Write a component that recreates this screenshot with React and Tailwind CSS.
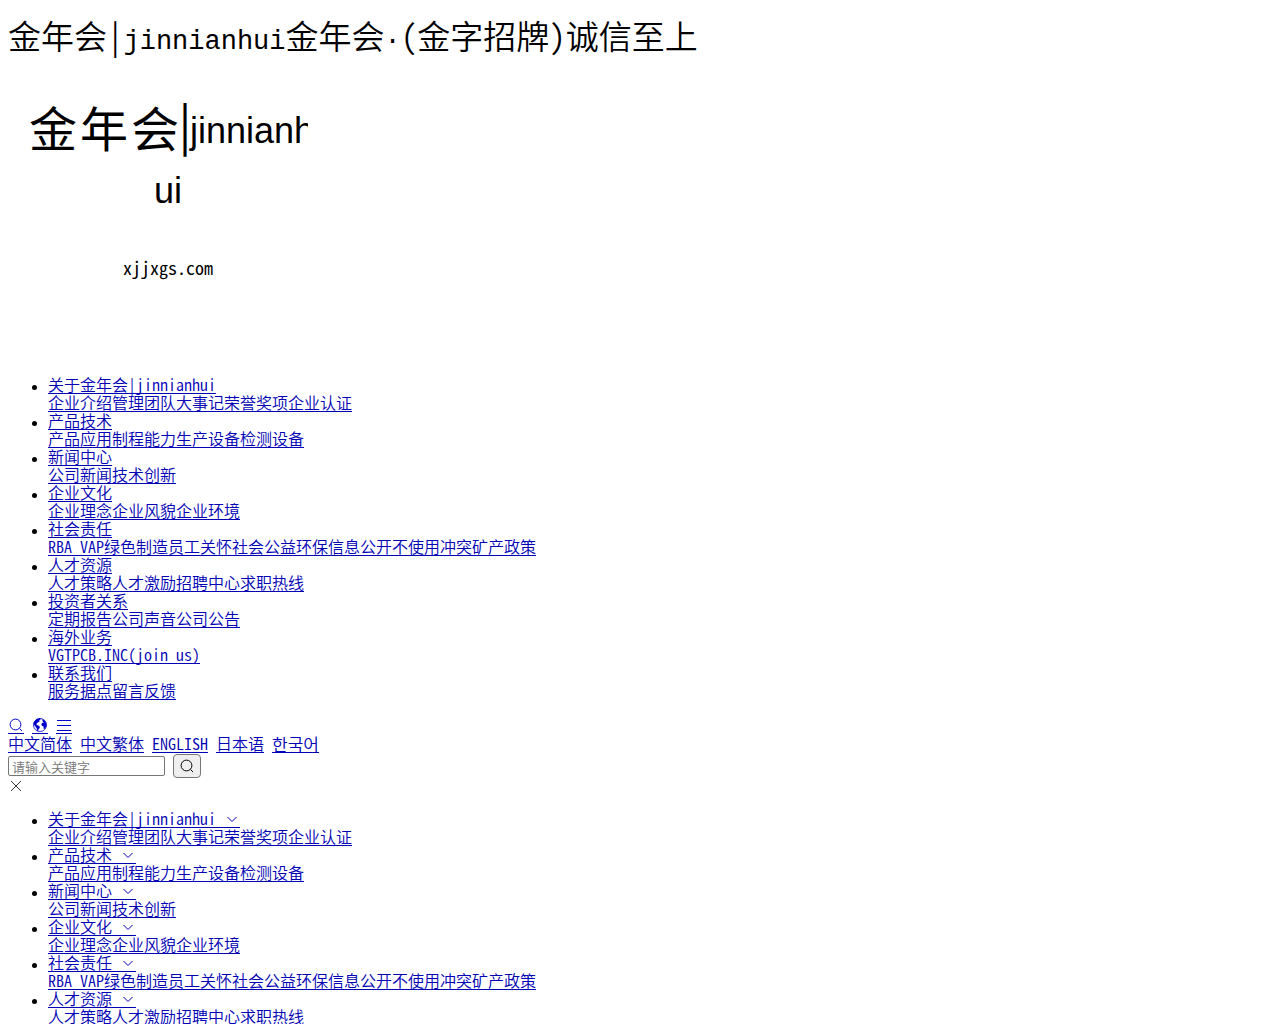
const menu = [
  { title: '关于金年会|jinnianhui', links: ['企业介绍', '管理团队', '大事记', '荣誉奖项', '企业认证'] },
  { title: '产品技术', links: ['产品应用', '制程能力', '生产设备', '检测设备'] },
  { title: '新闻中心', links: ['公司新闻', '技术创新'] },
  { title: '企业文化', links: ['企业理念', '企业风貌', '企业环境'] },
  { title: '社会责任', links: ['RBA VAP', '绿色制造', '员工关怀', '社会公益', '环保信息公开', '不使用冲突矿产政策'] },
  { title: '人才资源', links: ['人才策略', '人才激励', '招聘中心', '求职热线'] },
  { title: '投资者关系', links: ['定期报告', '公司声音', '公司公告'] },
  { title: '海外业务', links: ['VGTPCB.INC(join us)'] },
  { title: '联系我们', links: ['服务据点', '留言反馈'] },
]

const languages = ['中文简体', '中文繁体', 'ENGLISH', '日本语']

// border instead of underline, so that icons inside a link get the line too
const linkStyle = 'inline-block align-top h-[18px] leading-[17px] text-[#0000b4] border-b border-[#0000b4]'
const iconLink = 'h-[18px] pt-px text-[#0000cc] border-b border-[#0000b4]'

const SearchIcon = () => (
  <svg className="inline-block w-4 h-4 align-top" viewBox="0 0 16 16" fill="none" stroke="currentColor" aria-hidden="true">
    <circle cx="7.5" cy="7.5" r="5.4" />
    <path d="M11.500 11.500 14 14" />
  </svg>
)

const EarthIcon = () => (
  <svg className="inline-block w-4 h-4 align-top" viewBox="0 0 16 16" aria-hidden="true">
    <circle cx="8" cy="8" r="6.500" fill="none" stroke="currentColor" strokeWidth=".8" />
    <path fill="currentColor" d="M1.500 7C2 4 4.500 1.500 8 1.300L8.800 2.200 7.200 3.200 7.800 4.300 6.200 5.200 4.800 6.500 4.500 8 6.500 8.600 8 10 7.300 11.500 6.300 12.500 6 14.300 5 13.800 4.800 11.500 3.300 9.500Z" />
    <path fill="currentColor" d="M10.500 2 13 3.700 14.500 7 14.300 9.500 12.800 12 11.500 11.500 11.600 9.500 9.800 8.800 9.300 7 10.500 5.700 12 5.500 10.500 4.500Z" />
  </svg>
)

const MenuIcon = () => (
  <svg className="inline-block w-4 h-4 align-top" viewBox="0 0 16 16" fill="none" stroke="currentColor" aria-hidden="true">
    <path d="M1 3.500h14M1 8.500h14M1 13.500h14" />
  </svg>
)

const CloseIcon = () => (
  <svg className="block w-4 h-4" viewBox="0 0 16 16" fill="none" stroke="#333" aria-hidden="true">
    <path d="m3 3 10 10M13 3 3 13" />
  </svg>
)

const ChevronIcon = () => (
  <svg className="inline-block w-4 h-4 align-top" viewBox="0 0 16 16" fill="none" stroke="currentColor" aria-hidden="true">
    <path d="m3.500 7 4.500 4.500L12.500 7" />
  </svg>
)

const Logo = () => (
  <svg className="block w-[300px] h-[300px] overflow-hidden font-normal" viewBox="0 0 300 300" fill="black">
    <text x="21 72 123" y="87" fontSize="48">金年会</text>
    <text x="165" y="83" fontSize="48">|</text>
    <text x="182" y="83" fontSize="36" className="font-['Liberation_Sans']">jinnianhui</text>
    <text x="160" y="143" fontSize="36" textAnchor="middle" className="font-['Liberation_Sans']">ui</text>
    <text x="160" y="215" fontSize="18" textAnchor="middle">xjjxgs.com</text>
  </svg>
)

function NavList({ arrows }) {
  return (
    <ul className="my-4 pl-10 list-disc marker:text-black marker:font-['Liberation_Serif']">
      {menu.map((item) => (
        <li key={item.title}>
          <a href="#" className={linkStyle}>
            {item.title}
            {arrows && <>&nbsp;<ChevronIcon /></>}
          </a>
          <div>
            {item.links.map((link) => (
              <a key={link} href="#" className={linkStyle}>{link}</a>
            ))}
          </div>
        </li>
      ))}
    </ul>
  )
}

export default function App() {
  return (
    <div className="h-screen overflow-hidden bg-white px-2 pt-4 text-black text-base leading-[18px] font-[350] font-['Noto_Sans_CJK_SC','Noto_Sans_CJK_KR',sans-serif] [font-feature-settings:'hwid']">
      <h1 className="h-10 text-[33px] leading-[38px]">
        金年会|<span className="font-['Liberation_Mono'] text-[27px] leading-none">jinnianhui</span>
        金年会<span className="font-['Liberation_Mono'] text-[27px] leading-none">·</span>(金字招牌)诚信至上
      </h1>

      <a href="#" className="block w-[300px] mt-1" aria-label="金年会">
        <Logo />
      </a>

      <NavList />

      <div className="flex gap-2 h-[19px]">
        <a href="#" aria-label="搜索" className={iconLink}><SearchIcon /></a>
        <a href="#" aria-label="语言" className={iconLink}><EarthIcon /></a>
        <a href="#" aria-label="菜单" className={iconLink}><MenuIcon /></a>
      </div>
      <div className="flex gap-2 pb-px">
        {languages.map((name) => (
          <a key={name} href="#" className={linkStyle}>{name}</a>
        ))}
        <a href="#" lang="ko" className={`${linkStyle} text-[17px]`}>한국어</a>
      </div>

      <form className="flex items-center gap-2" onSubmit={(e) => e.preventDefault()}>
        <input
          type="text"
          aria-label="请输入关键字"
          placeholder="请输入关键字"
          className="w-[157px] h-5 px-[3px] border border-[#767676] rounded-xs text-[13px] leading-4 placeholder:text-[#757575]"
        />
        <button type="submit" aria-label="搜索" className="w-7 h-6 flex items-center justify-center border border-[#767676] rounded bg-[#efefef]">
          <SearchIcon />
        </button>
      </form>
      <button type="button" aria-label="关闭" className="block"><CloseIcon /></button>

      <NavList arrows />
    </div>
  )
}
